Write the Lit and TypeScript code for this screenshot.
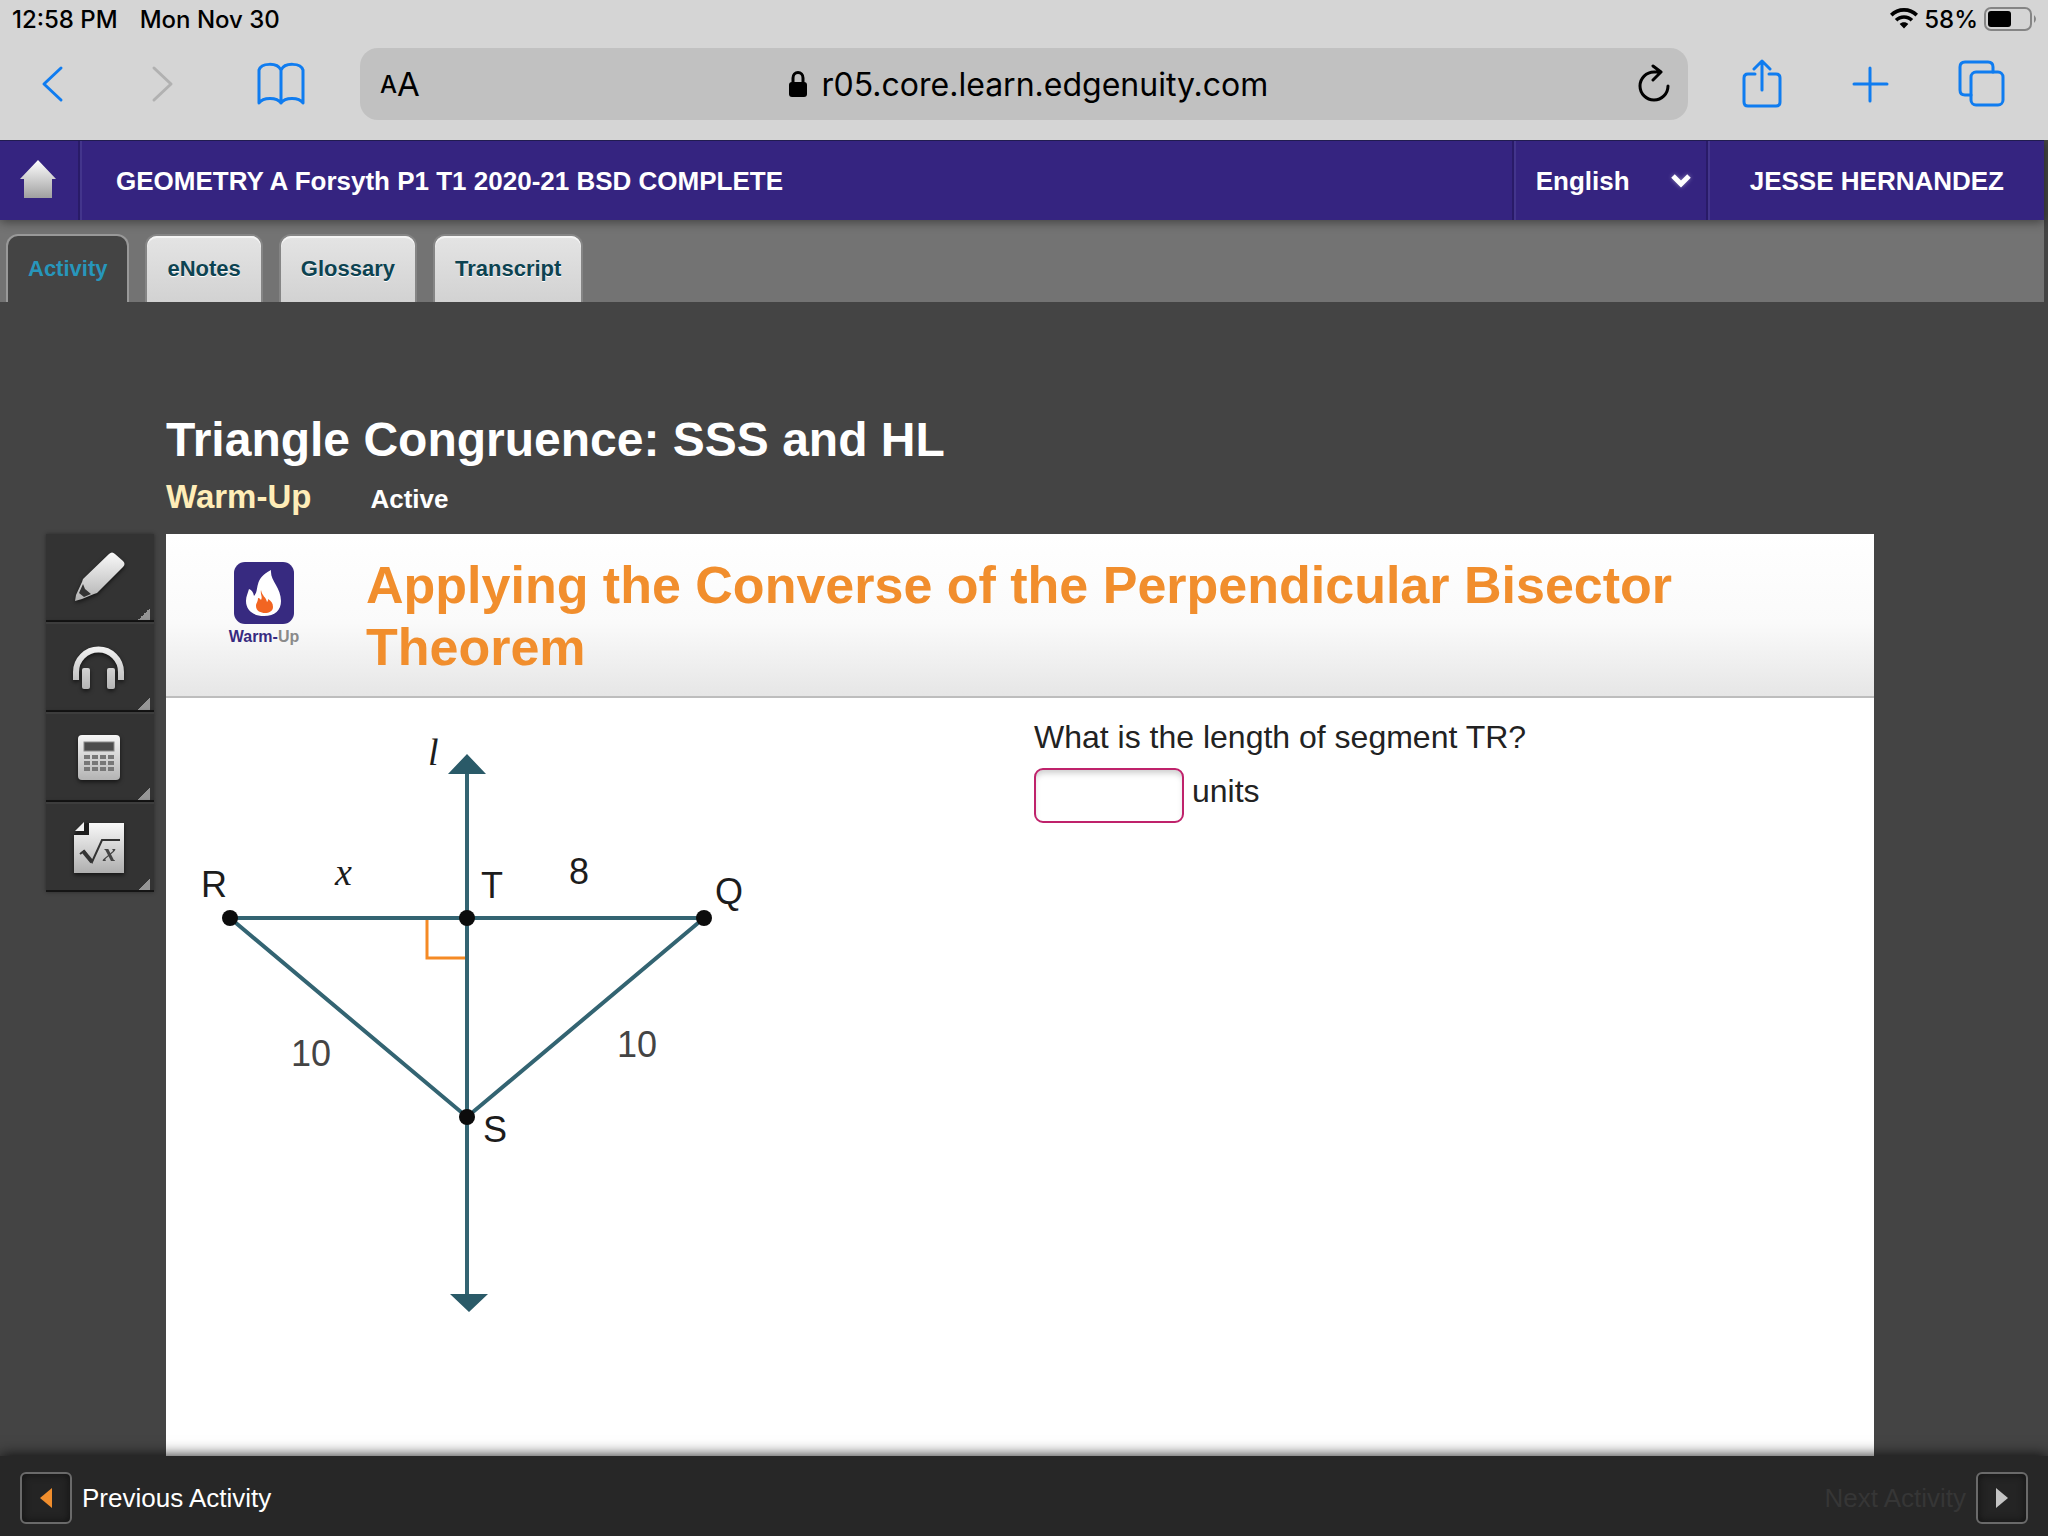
import { LitElement, html, css, svg } from "lit";
import { customElement, state } from "lit/decorators.js";
import { classMap } from "lit/directives/class-map.js";

const TABS = ["Activity", "eNotes", "Glossary", "Transcript"];

const grey = (id: string) => svg`
  <defs><linearGradient id=${id} gradientUnits="userSpaceOnUse" x1="0" y1="2" x2="0" y2="52">
    <stop offset="0" stop-color="#fafafa"/><stop offset="1" stop-color="#b0b0b0"/>
  </linearGradient></defs>`;

const pencil = svg`
  ${grey("gp")}
  <path d="M38 4q3-3 6 0l8 7q3 3 0 6L26 43l-3 1-12 5-7 2 1-6 6-13 1-3z" fill="url(#gp)"/>
  <path d="M12 34l2 5 6 5-7 3-5-4z" fill="#333"/>`;
const headphones = svg`
  ${grey("gh")}
  <path d="M5 40V32a22 22 0 0 1 45 0v8" fill="none" stroke="url(#gh)" stroke-width="6"/>
  <rect x="11" y="28" width="8" height="21" rx="2" fill="url(#gh)"/>
  <rect x="36" y="28" width="8" height="21" rx="2" fill="url(#gh)"/>`;
const calculator = svg`
  ${grey("gc")}
  <rect x="7" y="5" width="42" height="45" rx="4" fill="url(#gc)"/>
  <rect x="13" y="12" width="30" height="9" fill="#4c4c4c" stroke="#8a8a8a"/>
  ${[0, 1, 2].map((r) => [0, 1, 2, 3].map((c) => svg`
    <rect x=${13 + c * 8} y=${25 + r * 6} width="6" height="4" fill="#777"/>`))}`;
const formula = svg`
  ${grey("gf")}
  <path d="M3 15L15 3H53V53H3z" fill="#1e1e1e"/>
  <path d="M18 3H53V53H3V15H18z" fill="url(#gf)"/>
  <path d="M13 2V11H4z" fill="#f2f2f2"/>
  <path d="M9 34l4-3 8 11 10-22H49" fill="none" stroke="#333" stroke-width="2"/>
  <path d="M12 31l9 11" stroke="#333" stroke-width="4"/>
  <text x="32" y="41" class="root">x</text>`;

const TOOLS = [
  { name: "Highlighter", icon: pencil },
  { name: "Read aloud", icon: headphones },
  { name: "Calculator", icon: calculator },
  { name: "Formula sheet", icon: formula },
];

@customElement("browser-bar")
class BrowserBar extends LitElement {
  static styles = css`
    :host { display: block; position: relative; z-index: 2; background: #d5d5d5; color: #000; font-family: Inter, "Liberation Sans", sans-serif; }
    .status { display: flex; justify-content: space-between; align-items: center; box-sizing: border-box; height: 40px; padding: 0 10px 2px 12px; font-size: 24px; font-weight: 500; }
    .when, .power { display: flex; align-items: center; }
    .when { gap: 22px; }
    .power { gap: 6px; }
    .bar { display: flex; align-items: center; height: 72px; padding: 8px 42px 20px 35px; }
    button { display: flex; align-items: center; justify-content: center; border: 0; padding: 0; background: none; color: #0f7cf0; font: inherit; }
    button:disabled { color: #b1b1b1; }
    .nav { display: flex; align-items: center; gap: 74px; margin-right: 53px; }
    .actions { display: flex; align-items: center; gap: 66px; margin-left: 54px; }
    .field { flex: 1; display: flex; align-items: center; height: 72px; padding: 0 16px 0 20px; border-radius: 18px; background: #c1c1c1; }
    .field button { color: #000; }
    .size { font-size: 24px; font-weight: 500; }
    .big { font-size: 33px; }
    .address { flex: 1; display: flex; align-items: center; justify-content: center; gap: 14px; font-size: 32px; }
    svg { display: block; fill: none; stroke: currentColor; stroke-width: 3; stroke-linecap: round; stroke-linejoin: round; }
    .solid { fill: currentColor; stroke: none; }
  `;
  render() {
    return html`
      <div class="status">
        <div class="when"><span>12:58 PM</span><span>Mon Nov 30</span></div>
        <div class="power">
          <svg class="solid" width="28" height="22" viewBox="0 0 28 22" aria-label="Wi-Fi">
            <path d="M14 0C8.500 0 3.700 2 0 5.800l2.500 2.600C5.600 5.300 9.600 3.700 14 3.700s8.400 1.600 11.500 4.700L28 5.800C24.300 2 19.500 0 14 0z"/>
            <path d="M14 7.200c-3.600 0-6.800 1.400-9.200 3.700l2.600 2.600c1.700-1.700 4-2.700 6.600-2.700s4.900 1 6.600 2.700l2.600-2.600c-2.400-2.300-5.600-3.700-9.200-3.700z"/>
            <path d="M14 14.300c-1.700 0-3.200.6-4.300 1.700L14 20.500l4.300-4.500c-1.100-1.100-2.600-1.700-4.300-1.700z"/>
          </svg>
          <span>58%</span>
          <svg width="54" height="24" viewBox="0 0 54 24" aria-label="Battery">
            <rect x="1" y="1" width="46" height="22" rx="6" stroke="#858585" stroke-width="2"/>
            <rect x="4" y="4" width="23" height="16" rx="3" fill="#000" stroke="none"/>
            <path d="M50 8q4 4 0 8z" fill="#858585" stroke="none"/>
          </svg>
        </div>
      </div>
      <div class="bar">
        <div class="nav">
          <button aria-label="Back"><svg width="36" height="40" viewBox="0 0 36 40"><path d="M26 4L9 20 26 36"/></svg></button>
          <button aria-label="Forward" disabled><svg width="36" height="40" viewBox="0 0 36 40"><path d="M9 4l17 16L9 36"/></svg></button>
          <button aria-label="Bookmarks"><svg width="52" height="44" viewBox="0 0 52 44">
            <path d="M26 8C22 0 6 1 4 8v33c4-6 18-6 22 0 4-6 18-6 22 0V8C46 1 30 0 26 8zM26 8v33"/></svg></button>
        </div>
        <div class="field">
          <button aria-label="Page settings"><span class="size">A</span><span class="big">A</span></button>
          <div class="address">
            <svg class="solid" width="20" height="28" viewBox="0 0 20 28"><rect x="1" y="12" width="18" height="15" rx="3"/>
              <path d="M5 13V8a5 5.500 0 0 1 10 0v5" fill="none" stroke="#000" stroke-width="3"/></svg>
            <span>r05.core.learn.edgenuity.com</span>
          </div>
          <button aria-label="Reload"><svg width="36" height="40" viewBox="0 0 36 40">
            <path d="M32 22A14 14 0 1 1 18 8h6M17 2l8 6-8 8"/></svg></button>
        </div>
        <div class="actions">
          <button aria-label="Share"><svg width="40" height="52" viewBox="0 0 40 52">
            <path d="M13 16H6q-4 0-4 4v24q0 4 4 4h28q4 0 4-4V20q0-4-4-4h-7M20 32V3M12 11l8-8 8 8"/></svg></button>
          <button aria-label="New tab"><svg width="44" height="40" viewBox="0 0 44 40"><path d="M22 4v33M6 20h33"/></svg></button>
          <button aria-label="Tabs"><svg width="48" height="48" viewBox="0 0 48 48">
            <rect x="13" y="12" width="32" height="33" rx="5"/><path d="M13 35H7q-5 0-5-5V7q0-5 5-5h23q5 0 5 5v5"/></svg></button>
        </div>
      </div>`;
  }
}

@customElement("triangle-figure")
class TriangleFigure extends LitElement {
  static styles = css`
    :host { display: block; }
    svg { display: block; }
    .edge { fill: none; stroke: #336472; stroke-width: 4; }
    .head { fill: #2a5a68; }
    .right { fill: none; stroke: #f58a25; stroke-width: 3; }
    .dot { fill: #0c0c0c; }
    text { font-family: "Liberation Sans", sans-serif; font-size: 36px; fill: #1c1c1c; }
    .soft { fill: #444; }
    .var { font-family: "Liberation Serif", serif; font-style: italic; font-size: 38px; }
  `;
  render() {
    return html`
      <svg width="560" height="614" viewBox="190 716 560 614" role="img" aria-label="Triangle R Q S with line l through T and S">
        <path class="right" d="M427 918V958H466"/>
        <path class="edge" d="M467 770V1298M230 918H704M230 918L467 1117 704 918"/>
        <path class="head" d="M467 754L486 774H448zM469 1312L450 1294H488z"/>
        <circle class="dot" cx="230" cy="918" r="8"/><circle class="dot" cx="467" cy="918" r="8"/>
        <circle class="dot" cx="704" cy="918" r="8"/><circle class="dot" cx="467" cy="1117" r="8"/>
        <text class="var" x="428" y="765">l</text>
        <text class="var" x="335" y="885">x</text>
        <text x="201" y="897">R</text><text x="481" y="898">T</text><text x="569" y="884">8</text>
        <text x="715" y="904">Q</text><text x="483" y="1142">S</text>
        <text class="soft" x="291" y="1066">10</text><text class="soft" x="617" y="1057">10</text>
      </svg>`;
  }
}

@customElement("app-root")
class AppRoot extends LitElement {
  @state() private tab = "Activity";

  static styles = css`
    :host { display: flex; flex-direction: column; min-height: 100vh; background: #444; color: #fff; font-family: "Liberation Sans", Arial, sans-serif; }
    button, select, input { font: inherit; color: inherit; margin: 0; }
    svg { display: block; }
    .course { display: flex; height: 80px; margin-right: 4px; box-sizing: border-box; border-top: 1px solid #211c50; background: #352480; font-size: 26px; font-weight: bold; box-shadow: 0 2px 10px rgba(0,0,0,.45); position: relative; z-index: 1; }
    .cell { display: flex; align-items: center; border-left: 2px solid #43358c; box-shadow: -2px 0 0 #291b68; }
    .home { display: flex; align-items: center; padding: 0 20px 4px 18px; }
    .name { flex: 1; padding: 2px 0 0 34px; margin: 0; font-size: inherit; }
    .lang { padding: 0 16px 0 20px; }
    .lang select { appearance: none; border: 0; padding: 0; width: 134px; background: none; font-weight: bold; }
    .lang svg { filter: drop-shadow(0 0 2px rgba(255,255,255,.4)); }
    .user { padding: 2px 40px 0; }
    .tabs { display: flex; align-items: flex-end; gap: 20px; height: 82px; margin-right: 4px; padding-left: 8px; overflow: hidden; background: #737373; }
    .tab { height: 66px; padding: 0 20px; border: 0; border-radius: 10px 10px 0 0; background: linear-gradient(#e4e4e4, #d2d2d2); color: #0d4351; font-size: 22px; font-weight: bold; text-shadow: 0 1px 0 #fff; box-shadow: 0 0 0 2px #858585, inset 0 2px 0 #f4f4f4; }
    .tab.on { background: #444; color: #2796bb; text-shadow: none; box-shadow: 0 0 0 2px #999; }
    main { flex: 1; display: grid; grid-template-columns: 108px 1fr; grid-template-rows: auto 1fr; column-gap: 12px; padding: 108px 174px 0 46px; }
    .heading { grid-column: 2; padding-bottom: 10px; }
    h1 { margin: 0; font-size: 48px; line-height: 60px; }
    .sub { display: flex; align-items: baseline; gap: 59px; margin: 0; font-size: 33px; line-height: 54px; font-weight: bold; color: #ffedb8; }
    .sub span { font-size: 26px; line-height: 30px; color: #fff; }
    .rail { display: flex; flex-direction: column; }
    .tool { display: flex; align-items: center; justify-content: center; box-sizing: border-box; height: 90px; padding: 0 4px 0 0; border: 0; border-top: 2px solid #3d3d3d; border-bottom: 2px solid #151515; background: linear-gradient(135deg, transparent 50%, #969696 50%) right 4px bottom 0 / 12px 12px no-repeat #333; box-shadow: 0 0 4px rgba(0,0,0,.4); }
    .tool:first-child { height: 88px; border-top: 0; }
    .tool svg { filter: drop-shadow(0 2px 2px rgba(0,0,0,.6)); }
    .root { font: italic bold 26px "Liberation Serif", serif; fill: #444; }
    .sheet { display: flex; flex-direction: column; background: #fff; color: #222; }
    .banner { display: flex; align-items: flex-start; box-sizing: border-box; min-height: 164px; padding: 20px 62px 18px; gap: 66px; border-bottom: 2px solid #bdbdbd; background: linear-gradient(#fff, #fafafa 55%, #e6e6e6); }
    .logo { display: flex; flex-direction: column; align-items: center; gap: 2px; width: 72px; padding-top: 8px; font-size: 16px; font-weight: bold; line-height: 22px; color: #372a80; }
    .logo b span { color: #8a8a8a; }
    h2 { margin: 0; flex: 1; font-size: 52px; line-height: 62px; color: #f18e2d; }
    .work { display: grid; grid-template-columns: 868px 1fr; padding-top: 18px; }
    .figure { padding: 0 24px 14px; }
    .ask { margin: 0; font-size: 32px; line-height: 42px; }
    .answer { display: flex; align-items: flex-start; gap: 8px; padding-top: 10px; font-size: 32px; line-height: 46px; }
    .answer input { box-sizing: border-box; width: 150px; height: 55px; padding: 0 12px; border: 2px solid #bf226b; border-radius: 9px; background: #fff; box-shadow: inset 0 5px 6px -2px #ccc; }
    footer { display: flex; justify-content: space-between; align-items: center; box-sizing: border-box; height: 80px; padding: 4px 20px 0; background: #272727; font-size: 26px; box-shadow: 0 0 14px rgba(0,0,0,.9); }
    .step { display: flex; align-items: center; gap: 10px; padding: 0; border: 0; background: none; }
    .step:disabled { color: #363636; }
    .key { display: flex; align-items: center; justify-content: center; box-sizing: border-box; width: 52px; height: 52px; border: 2px solid #6a6a6a; border-radius: 6px; background: #242424; box-shadow: inset 0 0 8px #111; }
  `;

  render() {
    return html`
      <browser-bar></browser-bar>
      <header class="course">
        <a class="home" href="#home" aria-label="Home">
          <svg width="42" height="44" viewBox="0 0 42 44">
            <defs><linearGradient id="hm" x1="0" y1="0" x2="0" y2="1"><stop offset="0" stop-color="#fff"/><stop offset="1" stop-color="#a0a0a0"/></linearGradient></defs>
            <path d="M20 3L38 22H34V41H6V22H2z" fill="url(#hm)"/>
          </svg>
        </a>
        <h3 class="cell name">GEOMETRY A Forsyth P1 T1 2020-21 BSD COMPLETE</h3>
        <div class="cell lang">
          <select aria-label="Language"><option>English</option></select>
          <svg width="22" height="16" viewBox="0 0 22 16"><path d="M3 3l8 8 8-8" fill="none" stroke="#fff" stroke-width="5"/></svg>
        </div>
        <div class="cell user">JESSE HERNANDEZ</div>
      </header>
      <nav class="tabs">
        ${TABS.map((t) => html`<button class=${classMap({ tab: true, on: t === this.tab })} @click=${() => (this.tab = t)}>${t}</button>`)}
      </nav>
      <main>
        <div class="heading">
          <h1>Triangle Congruence: SSS and HL</h1>
          <p class="sub">Warm-Up<span>Active</span></p>
        </div>
        <div class="rail">
          ${TOOLS.map((t) => html`<button class="tool" aria-label=${t.name}><svg width="54" height="54" viewBox="0 0 54 54">${t.icon}</svg></button>`)}
        </div>
        <section class="sheet">
          <div class="banner">
            <div class="logo">
              <svg width="60" height="62" viewBox="0 0 60 62">
                <rect width="60" height="62" rx="11" fill="#372a80"/>
                <path d="M37 8c-1 11 10 17 10 31 0 9-6 15-17 15S12 48 12 39c0-5 2-8 3-12 3 1 4 3 5 7 6-6-1-17 17-26z" fill="#fff"/>
                <path d="M27 28c1 6 5 7 6 12 1-1 1-2 1-3 3 2 5 4 5 8 0 4-4 6-8 6s-9-2-9-7c0-3 2-4 2-8 2 0 2 1 3 2 2-3-1-6 0-10z" fill="#f26522"/>
              </svg>
              <b>Warm-<span>Up</span></b>
            </div>
            <h2>Applying the Converse of the Perpendicular Bisector Theorem</h2>
          </div>
          <div class="work">
            <div class="figure"><triangle-figure></triangle-figure></div>
            <div>
              <p class="ask" id="question">What is the length of segment TR?</p>
              <div class="answer"><input id="length" type="text" aria-labelledby="question units"><label id="units" for="length">units</label></div>
            </div>
          </div>
        </section>
      </main>
      <footer>
        <button class="step"><span class="key"><svg width="12" height="20" viewBox="0 0 12 20"><path d="M12 0V20L0 10z" fill="#f18e2d"/></svg></span>Previous Activity</button>
        <button class="step" disabled>Next Activity<span class="key"><svg width="12" height="20" viewBox="0 0 12 20"><path d="M0 0V20L12 10z" fill="#c4c4c4"/></svg></span></button>
      </footer>`;
  }
}
